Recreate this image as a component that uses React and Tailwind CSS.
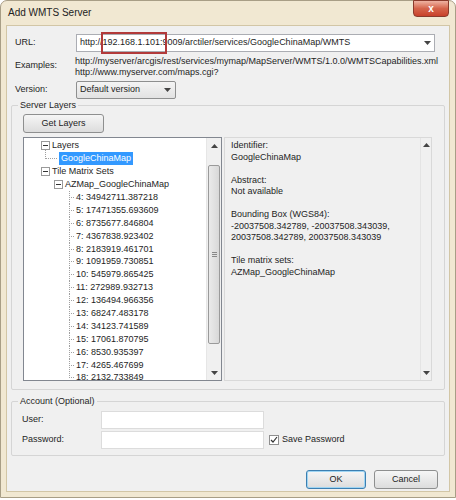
import React from "react";

const levels = [
  "4: 34942711.387218",
  "5: 17471355.693609",
  "6: 8735677.846804",
  "7: 4367838.923402",
  "8: 2183919.461701",
  "9: 1091959.730851",
  "10: 545979.865425",
  "11: 272989.932713",
  "12: 136494.966356",
  "13: 68247.483178",
  "14: 34123.741589",
  "15: 17061.870795",
  "16: 8530.935397",
  "17: 4265.467699",
  "18: 2132.733849",
];

function Minus() {
  return (
    <span className="w-[9px] h-[9px] border border-[#9a9a9a] bg-white flex items-center justify-center shrink-0">
      <span className="w-[5px] h-px bg-[#333]" />
    </span>
  );
}

function Arrow({ down }) {
  return (
    <svg width="7" height="4" viewBox="0 0 7 4">
      <path d={down ? "M0 0h7L3.5 4z" : "M0 4h7L3.5 0z"} fill="#444" />
    </svg>
  );
}

function Button({ children, primary, className }) {
  return (
    <button
      className={
        "h-[19px] rounded-[3px] border bg-gradient-to-b from-[#f6f6f6] to-[#dcdcdc] text-[9px] text-[#222] " +
        (primary ? "border-[#3c7fb1] shadow-[inset_0_0_0_1px_#9fd5f3] " : "border-[#8e8f8f] ") +
        (className || "")
      }
    >
      {children}
    </button>
  );
}

function GroupBox({ title, className, children }) {
  return (
    <div className={"relative border border-[#d5d5d5] rounded-[2px] " + (className || "")}>
      <span className="absolute -top-[7px] left-[6px] bg-[#f0f0f0] px-[2px] text-[9px] leading-[12px]">
        {title}
      </span>
      {children}
    </div>
  );
}

export default function App() {
  return (
    <div className="w-[456px] h-[500px] bg-white font-['Liberation_Sans',Arial,sans-serif] text-[#1e1e1e]">
      <div className="w-[456px] h-[498px] bg-[#f1e8d2] rounded-t-[7px] border border-[#a89e86] flex flex-col">
        {/* title bar */}
        <div className="h-[24px] flex items-start justify-between shrink-0">
          <span className="ml-[7px] mt-[6px] text-[10px] leading-[12px] text-[#222]">Add WMTS Server</span>
          <div className="mr-[6px] w-[36px] h-[17px] -mt-px rounded-b-[4px] border border-[#8a3a2c] bg-gradient-to-b from-[#eeb2a2] via-[#d5644b] to-[#c8402a] flex items-center justify-center">
            <span className="text-white text-[10px] font-bold leading-none">x</span>
          </div>
        </div>

        {/* client area */}
        <div className="mx-[5px] h-[467px] bg-[#f0f0f0] border border-[#d2c6a6] flex flex-col px-[3px] text-[9px]">
          {/* URL */}
          <div className="flex items-center mt-[8px] h-[18px]">
            <span className="w-[66px] pl-[5px]">URL:</span>
            <div className="relative flex-1 mr-[11px] h-[18px] bg-white border border-[#abadb3] flex items-center pl-[3px]">
              <span className="flex-1">http://192.168.1.101:9009/arctiler/services/GoogleChinaMap/WMTS</span>
              <span className="w-[14px] flex justify-center"><Arrow down /></span>
              <div className="absolute left-[24px] -top-[3px] w-[66px] h-[22px] border-2 border-[#b23a3a]" />
            </div>
          </div>

          {/* Examples */}
          <div className="flex mt-[4px]">
            <span className="w-[66px] pl-[5px] pt-[3px]">Examples:</span>
            <div className="leading-[11px] -ml-px">
              <div>http://myserver/arcgis/rest/services/mymap/MapServer/WMTS/1.0.0/WMTSCapabilities.xml</div>
              <div>http://www.myserver.com/maps.cgi?</div>
            </div>
          </div>

          {/* Version */}
          <div className="flex items-center mt-[3px]">
            <span className="w-[66px] pl-[5px]">Version:</span>
            <div className="w-[100px] h-[18px] rounded-[2px] border border-[#8e8f8f] bg-gradient-to-b from-[#f4f4f4] to-[#e2e2e2] flex items-center pl-[3px]">
              <span className="flex-1">Default version</span>
              <span className="w-[16px] flex justify-center"><Arrow down /></span>
            </div>
          </div>

          {/* Server Layers */}
          <GroupBox title="Server Layers" className="mt-[6px] mx-[1px] h-[285px] pt-[8px] pl-[11px] pr-[12px]">
            <Button className="w-[81px]">Get Layers</Button>
            <div className="flex mt-[4px] h-[244px] gap-[2px]">
              {/* tree */}
              <div className="w-[199px] h-full bg-white border border-[#828790] flex overflow-hidden">
                <div className="flex-1 pt-[1px] leading-[13px] text-[9px] overflow-hidden">
                  <div className="flex items-center h-[13px] pl-[17px] gap-[2px]">
                    <Minus />
                    <span>Layers</span>
                  </div>
                  <div className="flex items-center h-[13px] pl-[21px]">
                    <div className="w-[12px] h-[13px] relative">
                      <div className="absolute left-0 -top-[2px] h-[9px] border-l border-dotted border-[#a0a0a0]" />
                      <div className="absolute left-0 top-[6px] w-[12px] border-t border-dotted border-[#a0a0a0]" />
                    </div>
                    <span className="bg-[#3399ff] text-white px-[2px] ml-[2px] leading-[13px]">GoogleChinaMap</span>
                  </div>
                  <div className="flex items-center h-[13px] pl-[17px] gap-[2px]">
                    <Minus />
                    <span>Tile Matrix Sets</span>
                  </div>
                  <div className="flex items-center h-[13px] pl-[30px] gap-[2px]">
                    <Minus />
                    <span>AZMap_GoogleChinaMap</span>
                  </div>
                  {levels.map((l, i) => (
                    <div key={l} className="flex items-center h-[12.9px] pl-[45px]">
                      <div className="w-[6px] h-[13px] relative">
                        <div
                          className={
                            "absolute left-0 top-0 border-l border-dotted border-[#a0a0a0] " +
                            (i === levels.length - 1 ? "h-[7px]" : "h-[13px]")
                          }
                        />
                        <div className="absolute left-0 top-[6px] w-[5px] border-t border-dotted border-[#a0a0a0]" />
                      </div>
                      <span className="ml-px">{l}</span>
                    </div>
                  ))}
                </div>
                {/* scrollbar */}
                <div className="w-[15px] h-full bg-[#f0f0f0] border-l border-[#e6e6e6] flex flex-col items-center">
                  <div className="h-[15px] flex items-center"><Arrow /></div>
                  <div className="flex-1 w-full px-[1px] pt-[12px] pb-[21px]">
                    <div className="h-full rounded-[2px] border border-[#9a9a9a] bg-gradient-to-r from-[#eaeaea] to-[#d8d8d8] flex items-center justify-center">
                      <div className="flex flex-col gap-[1px]">
                        <span className="w-[5px] h-px bg-[#888]" />
                        <span className="w-[5px] h-px bg-[#888]" />
                        <span className="w-[5px] h-px bg-[#888]" />
                      </div>
                    </div>
                  </div>
                  <div className="h-[15px] flex items-center"><Arrow down /></div>
                </div>
              </div>

              {/* info */}
              <div className="flex-1 h-full border border-[#d9d9d9] flex">
                <div className="flex-1 pl-[6px] pt-[2px] leading-[11.5px] text-[9px]">
                  <div>Identifier:</div>
                  <div>GoogleChinaMap</div>
                  <div className="mt-[11.5px]">Abstract:</div>
                  <div>Not available</div>
                  <div className="mt-[11.5px]">Bounding Box (WGS84):</div>
                  <div>-20037508.342789, -20037508.343039,</div>
                  <div>20037508.342789, 20037508.343039</div>
                  <div className="mt-[11.5px]">Tile matrix sets:</div>
                  <div>AZMap_GoogleChinaMap</div>
                </div>
                <div className="w-[11px] h-full border-l border-[#e4e4e4] flex flex-col items-center justify-between py-[5px]">
                  <Arrow />
                  <Arrow down />
                </div>
              </div>
            </div>
          </GroupBox>

          {/* Account */}
          <GroupBox title="Account (Optional)" className="mt-[11px] mx-[1px] h-[55px] pt-[9px] pl-[10px]">
            <div className="flex items-center h-[18px]">
              <span className="w-[79px]">User:</span>
              <div className="w-[163px] h-[18px] bg-white border border-[#dcdcdc]" />
            </div>
            <div className="flex items-center h-[18px] mt-[2px]">
              <span className="w-[79px]">Password:</span>
              <div className="w-[163px] h-[18px] bg-white border border-[#dcdcdc]" />
              <span className="ml-[5px] w-[10px] h-[10px] border border-[#8f8f8f] bg-white flex items-center justify-center">
                <svg width="8" height="8" viewBox="0 0 8 8">
                  <path d="M1 4l2 2 4-5" stroke="#333" strokeWidth="1.2" fill="none" />
                </svg>
              </span>
              <span className="ml-[3px]">Save Password</span>
            </div>
          </GroupBox>

          {/* buttons */}
          <div className="flex justify-end gap-[8px] mt-[14px] mr-[8px]">
            <Button primary className="w-[60px]">OK</Button>
            <Button className="w-[64px]">Cancel</Button>
          </div>
        </div>
      </div>
    </div>
  );
}
